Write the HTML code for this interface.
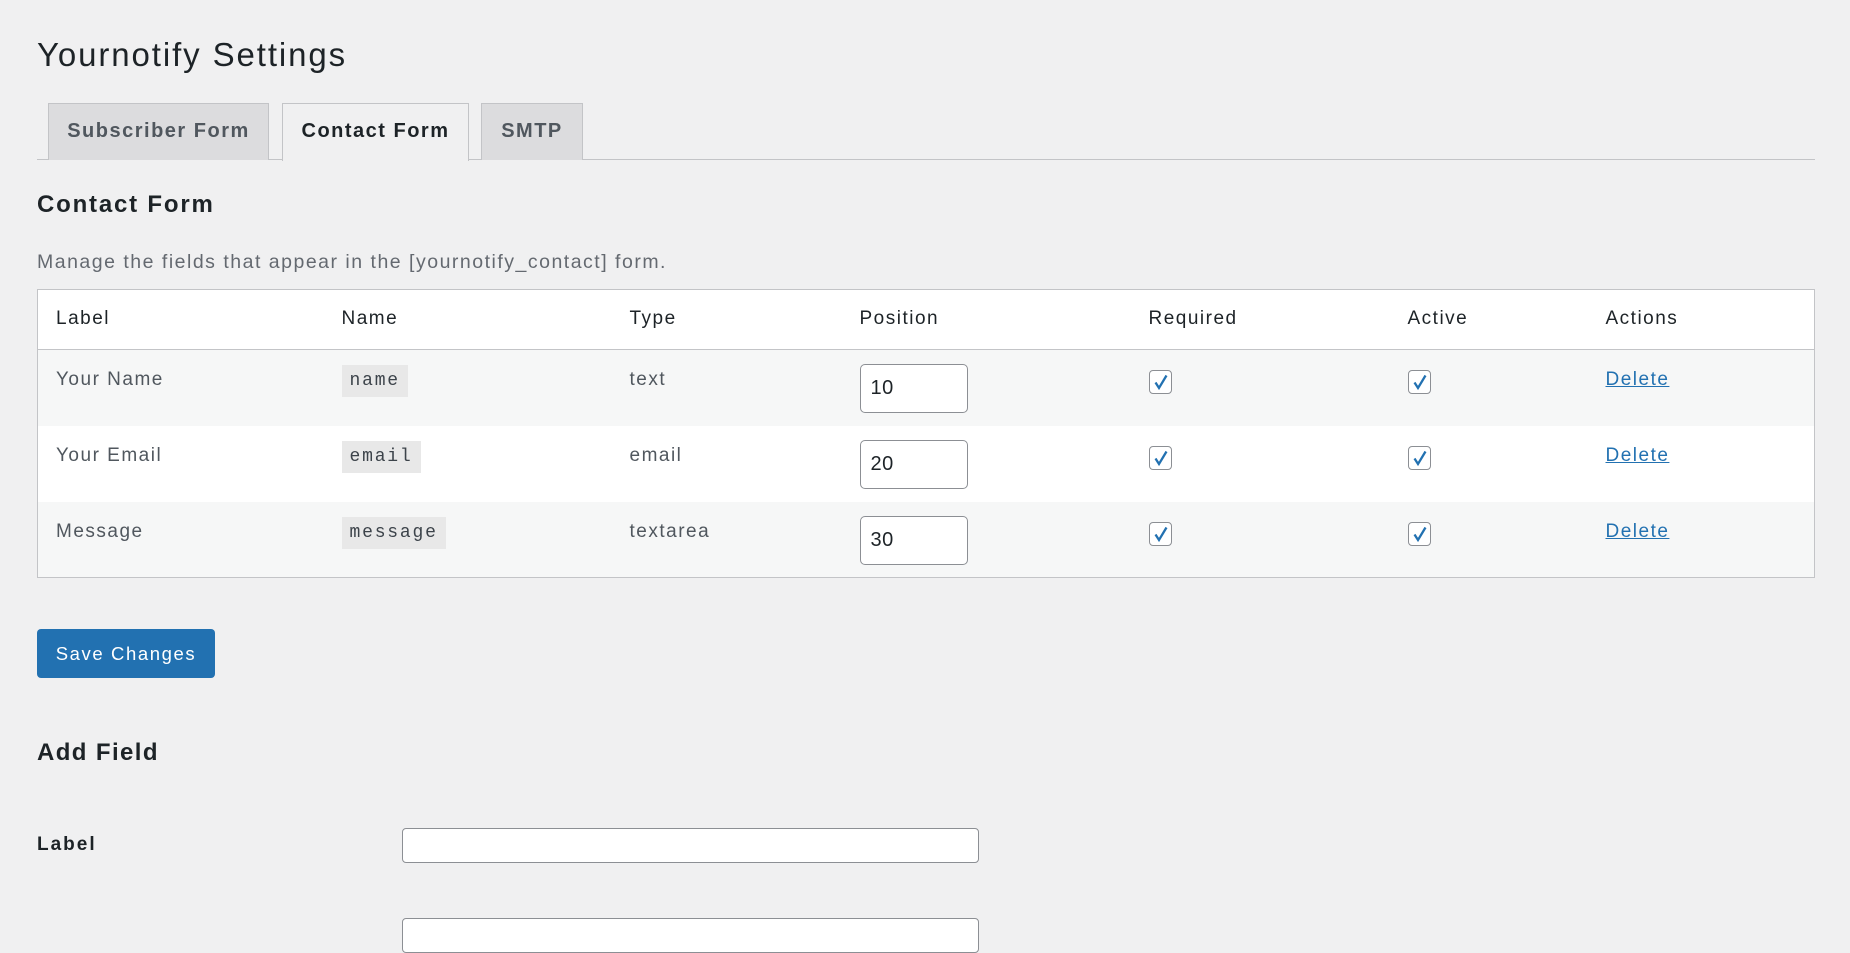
<!DOCTYPE html>
<html><head><meta charset="utf-8"><style>
*{box-sizing:border-box;margin:0;padding:0}
body{width:1850px;height:924px;overflow:hidden;background:#f0f0f1;font-family:"Liberation Sans",Arial,sans-serif;color:#1d2327;position:relative;letter-spacing:1.5px}
.a{position:absolute;white-space:nowrap}
h1{position:absolute;left:37px;top:36px;font-size:33px;font-weight:400;letter-spacing:1.9px}
.tabline{position:absolute;left:37px;top:159px;width:1778px;height:1px;background:#c3c4c7}
.tab{position:absolute;top:103px;height:57px;border:1px solid #c3c4c7;border-bottom:none;background:#dcdcde;color:#50575e;font-size:20px;font-weight:700;line-height:55px;text-align:center;letter-spacing:1.5px}
.tab.on{background:#f0f0f1;color:#1d2327;height:58px}
table{position:absolute;left:37px;top:289px;width:1778px;border:1px solid #c3c4c7;border-collapse:collapse;background:#fff;font-size:19px}
td,th{text-align:left;font-weight:400;vertical-align:top;padding:0}
tr.h{height:60px;border-bottom:1px solid #c3c4c7}
tr.h th{padding-top:18px;color:#1d2327}
tr.r{height:76px}
tr.r td{padding-top:19px;color:#50575e}
tr.s{background:#f6f7f7}
code{font-family:"Liberation Mono",monospace;background:#e8e8e8;padding:6px 8px;font-size:18px;color:#3c434a;letter-spacing:1.8px}
.in{display:block;width:108px;height:49px;border:1.5px solid #8c8f94;border-radius:5px;background:#fff;font-size:20px;padding:12px 10px;color:#1d2327;margin-top:-5px;letter-spacing:0.5px}
.cb{display:block;width:23px;height:24px;border:1.5px solid #8c8f94;border-radius:4px;background:#fff;position:relative;margin-top:1px}
.cb svg{position:absolute;left:3px;top:2px}
a{color:#2271b1;text-decoration:underline}
.btn{position:absolute;left:37px;top:629px;width:178px;height:49px;background:#2271b1;border-radius:4px;color:#fff;font-size:18.5px;line-height:49px;text-align:center;letter-spacing:1.6px}
.field{position:absolute;left:402px;width:577px;height:35px;background:#fff;border:1.5px solid #8c8f94;border-radius:4px}
</style></head><body>
<h1>Yournotify Settings</h1>
<div class="tabline"></div>
<div class="tab" style="left:48px;width:221px">Subscriber Form</div>
<div class="tab on" style="left:282px;width:187px">Contact Form</div>
<div class="tab" style="left:481px;width:102px">SMTP</div>
<div class="a" style="left:37px;top:191px;font-size:24px;font-weight:700;letter-spacing:1.8px">Contact Form</div>
<div class="a" style="left:37px;top:251px;font-size:19.5px;color:#646970">Manage the fields that appear in the [yournotify_contact] form.</div>
<table>
<colgroup><col style="width:304px"><col style="width:288px"><col style="width:230px"><col style="width:289px"><col style="width:259px"><col style="width:198px"><col></colgroup>
<tr class="h"><th style="padding-left:18px">Label</th><th>Name</th><th>Type</th><th>Position</th><th>Required</th><th>Active</th><th>Actions</th></tr>
<tr class="r s"><td style="padding-left:18px">Your Name</td><td><code>name</code></td><td>text</td><td><span class="in">10</span></td><td><span class="cb"><svg width="16" height="18" viewBox="0 0 16 18"><path d="M2.5 9.5l3.5 5.5 7.5-12.5" fill="none" stroke="#2271b1" stroke-width="2.3"/></svg></span></td><td><span class="cb"><svg width="16" height="18" viewBox="0 0 16 18"><path d="M2.5 9.5l3.5 5.5 7.5-12.5" fill="none" stroke="#2271b1" stroke-width="2.3"/></svg></span></td><td><a>Delete</a></td></tr>
<tr class="r"><td style="padding-left:18px">Your Email</td><td><code>email</code></td><td>email</td><td><span class="in">20</span></td><td><span class="cb"><svg width="16" height="18" viewBox="0 0 16 18"><path d="M2.5 9.5l3.5 5.5 7.5-12.5" fill="none" stroke="#2271b1" stroke-width="2.3"/></svg></span></td><td><span class="cb"><svg width="16" height="18" viewBox="0 0 16 18"><path d="M2.5 9.5l3.5 5.5 7.5-12.5" fill="none" stroke="#2271b1" stroke-width="2.3"/></svg></span></td><td><a>Delete</a></td></tr>
<tr class="r s"><td style="padding-left:18px">Message</td><td><code>message</code></td><td>textarea</td><td><span class="in">30</span></td><td><span class="cb"><svg width="16" height="18" viewBox="0 0 16 18"><path d="M2.5 9.5l3.5 5.5 7.5-12.5" fill="none" stroke="#2271b1" stroke-width="2.3"/></svg></span></td><td><span class="cb"><svg width="16" height="18" viewBox="0 0 16 18"><path d="M2.5 9.5l3.5 5.5 7.5-12.5" fill="none" stroke="#2271b1" stroke-width="2.3"/></svg></span></td><td><a>Delete</a></td></tr>
</table>
<div class="btn">Save Changes</div>
<div class="a" style="left:37px;top:739px;font-size:24px;font-weight:700;letter-spacing:1.4px">Add Field</div>
<div class="a" style="left:37px;top:834px;font-size:19px;font-weight:700;letter-spacing:2px">Label</div>
<div class="field" style="top:828px"></div>
<div class="field" style="top:918px"></div>
</body></html>
